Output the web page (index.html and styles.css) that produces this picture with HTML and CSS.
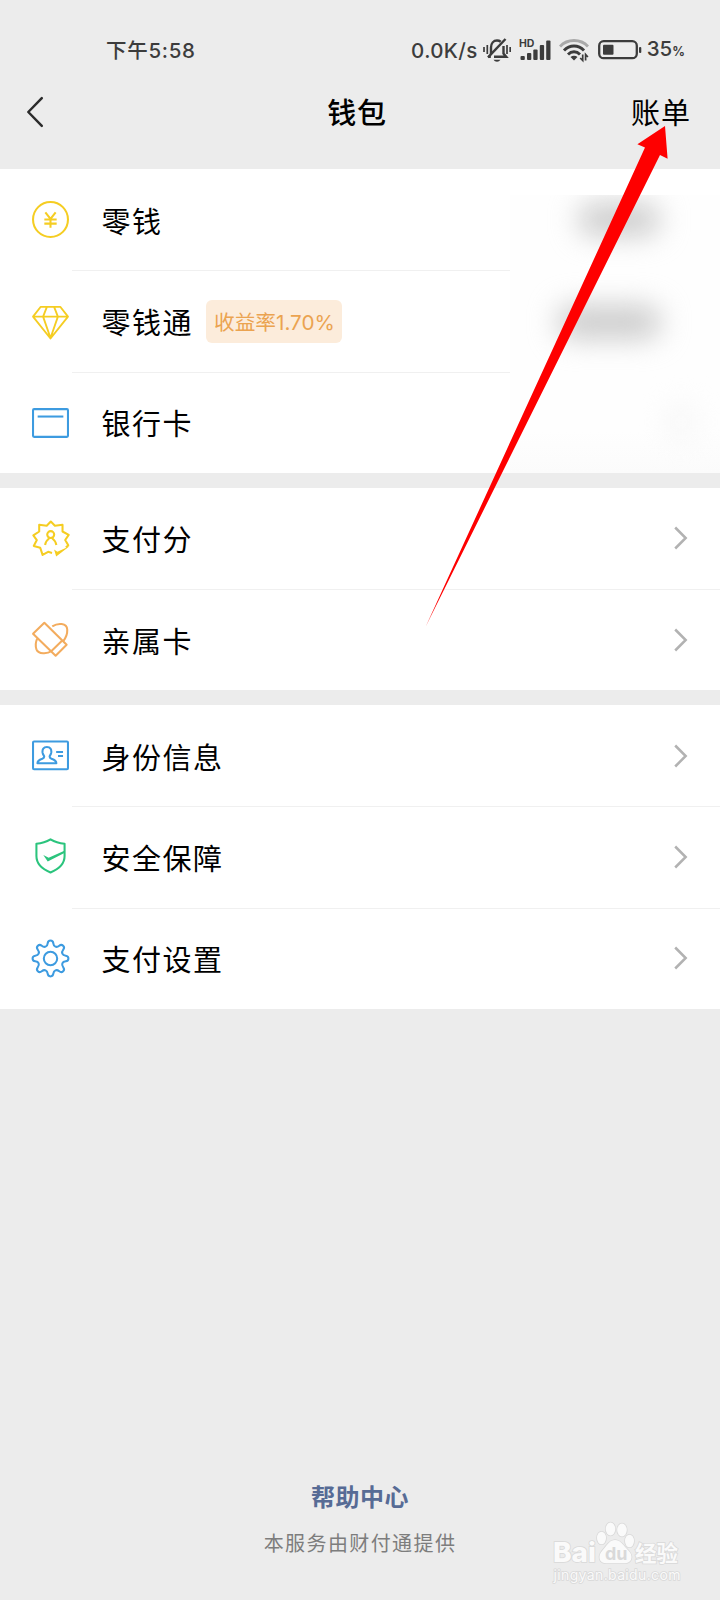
FILE: index.html
```html
<!DOCTYPE html>
<html lang="zh-CN">
<head>
  <meta charset="UTF-8">
  <meta name="viewport" content="width=device-width, initial-scale=1.0">
  <title>钱包</title>
  <link rel="stylesheet" href="styles.css">
</head>
<body>
  <div class="status-bar">
    <span class="time">下午5:58</span>
    <div class="status-right">
      <span class="speed">0.0K/s</span>
      <!-- muted bell -->
      <svg class="bell" width="28" height="26" viewBox="0 0 28 26" fill="none" stroke="#3c3c3c" stroke-width="2.400">
        <path d="M8 17V10.500C8 6.500 10.500 3.500 14 3.500c1.500 0 2.700.4 3.700 1.200M20.500 9v7.500l2.700 3.200H11M5.300 19.700h2.500"/>
        <path d="M22.500 2 5 20.300"/>
        <path d="M10.500 22.800h7c-1 1.300-2 1.900-3.500 1.900s-2.700-.6-3.500-1.900z" fill="#3c3c3c" stroke="none"/>
        <path d="M1 10v5M4.300 8v9M24 8v9M27.200 10v5" stroke-width="1.700"/>
      </svg>
      <!-- signal -->
      <svg class="signal" width="32" height="26" viewBox="0 0 32 26">
        <text x="0" y="9.500" class="hd">HD</text>
        <g fill="#3c3c3c">
          <rect x="1.500" y="19" width="4.300" height="4" rx="1"/>
          <rect x="8" y="16" width="4.300" height="7" rx="1"/>
          <rect x="14.300" y="12.500" width="4.300" height="10.500" rx="1"/>
          <rect x="20.800" y="8" width="4.300" height="15" rx="1"/>
          <rect x="27.200" y="3.500" width="4.300" height="19.500" rx="1"/>
        </g>
      </svg>
      <!-- wifi -->
      <svg class="wifi" width="30" height="26" viewBox="0 0 30 26" fill="none" stroke="#3c3c3c" stroke-width="2.900">
        <path d="M1 9.500C8.500 1.500 21.500 1.500 29 9.500" stroke="#a9a9a9"/>
        <path d="M5 13.500c5.600-6 14.400-6 20 0M9 17.500c3.500-3.600 8.500-3.600 12 0"/>
        <path d="M11.500 20c2-1.800 5-1.800 7 0L15 23.500z" fill="#3c3c3c" stroke="none"/>
        <path d="M23.700 17.500v6l-2.500-2.500M26.600 23.500v-6l2.300 2.500" stroke-width="1.700"/>
      </svg>
      <!-- battery -->
      <svg class="battery" width="44" height="20" viewBox="0 0 44 20">
        <rect x="1.200" y="1.200" width="37.600" height="17" rx="4.500" fill="none" stroke="#3c3c3c" stroke-width="2.300"/>
        <rect x="5" y="4.800" width="10.500" height="10" rx="1" fill="#3c3c3c"/>
        <rect x="41" y="7" width="2.300" height="6" rx="1" fill="#3c3c3c"/>
      </svg>
      <span class="percent">35<small>%</small></span>
    </div>
  </div>

  <header class="nav">
    <svg class="back" width="18" height="32" viewBox="0 0 18 32" fill="none" stroke="#2b2b2b" stroke-width="2.500" stroke-linecap="round" stroke-linejoin="round">
      <path d="M15.800 2.200 2.300 16l13.500 13.800"/>
    </svg>
    <h1>钱包</h1>
    <a class="bill">账单</a>
  </header>

  <main>
    <section class="group group-balance">
      <div class="row">
        <svg class="icon yellow" viewBox="0 0 36 36">
          <circle cx="18" cy="18" r="17"/>
          <path d="M13 11l5 6.500 5-6.500M12 18h12M12 22h12M18 17.500V26"/>
        </svg>
        <div class="cell">零钱</div>
      </div>
      <div class="row">
        <svg class="icon yellow" viewBox="0 0 36 36">
          <path d="M8.500 3.700h19L35 13.300 18 34.500 1 13.300zM1 13.300h34M14.500 3.700l-3.700 9.600L18 34l7.200-20.700-3.700-9.600" stroke-width="1.800"/>
        </svg>
        <div class="cell">零钱通<span class="badge">收益率1.70%</span></div>
      </div>
      <div class="row">
        <svg class="icon blue" viewBox="0 0 36 36">
          <rect x="1" y="5" width="34" height="27" rx="1"/>
          <path d="M5.500 12.200h25"/>
        </svg>
        <div class="cell">银行卡</div>
      </div>
      <div class="mosaic">
        <i class="smudge smudge-a"></i>
        <i class="smudge smudge-b"></i>
        <i class="smudge smudge-c"></i>
      </div>
    </section>

    <section class="group">
      <div class="row">
        <svg class="icon yellow" viewBox="0 0 36 36">
          <path d="M19.500 32l-3.800-1-5.400 3-2.300-7-6.300-1.800 3-5.700-3.400-4.500L7 11.200V4.700l7.300.8L18.300 1.500l4 4 7.400-.8v6.500l6 3.300-3.400 5 3 5-2.300 2.300"/>
          <circle cx="18.200" cy="14.200" r="3.400"/>
          <path d="M12.700 24.300c.5-3 2-5 4.300-6.800M23.700 24.300c-.5-3-2-5-4.300-6.800"/>
          <path d="M21.500 28.800l3.200 2L36.500 25.500 23.500 35.500z" class="solid"/>
        </svg>
        <div class="cell">支付分</div>
        <svg class="arrow" viewBox="0 0 14 24"><path d="M1.200 1.500 11.700 12 1.200 22.500"/></svg>
      </div>
      <div class="row">
        <svg class="icon orange" viewBox="0 0 36 36">
          <path d="M12 1.800 33.700 23.200 23 33.800 1 12.500zM18.700 29.500l11-10.700"/>
          <path d="M19.700 5.200C25 1.800 34 1.500 34.300 8.500c.2 4.500-1.600 8.200-4 11.300M5 17.200c-1.700 4-1.800 7-.7 10.300 2 5 10.500 4.800 14.900 1.700"/>
        </svg>
        <div class="cell">亲属卡</div>
        <svg class="arrow" viewBox="0 0 14 24"><path d="M1.200 1.500 11.700 12 1.200 22.500"/></svg>
      </div>
    </section>

    <section class="group">
      <div class="row">
        <svg class="icon blue" viewBox="0 0 36 36">
          <rect x="1" y="4.300" width="34" height="27" rx="1"/>
          <path d="M14.500 9.800c3.300 0 4.700 2.300 4.200 5.500-.3 1.500-1 2.500-1.500 3.300-.3 1.300.3 2 1.800 2.600 3 1.100 4.700 1.800 4.700 4.300h-18.400c0-2.500 1.700-3.200 4.700-4.300 1.500-.6 2.100-1.300 1.800-2.600-.5-.8-1.200-1.800-1.500-3.300-.5-3.200.9-5.500 4.200-5.500zM23.500 14.500h6.700M25.300 18.500h4.900"/>
        </svg>
        <div class="cell">身份信息</div>
        <svg class="arrow" viewBox="0 0 14 24"><path d="M1.200 1.500 11.700 12 1.200 22.500"/></svg>
      </div>
      <div class="row">
        <svg class="icon green" viewBox="0 0 36 36">
          <path d="M18 1.300c4.500 2.700 9 3.800 13.700 4.200V17.500c0 7.500-5 12.500-13.700 16-8.700-3.500-13.700-8.500-13.700-16V5.500C9 5.100 13.500 4 18 1.300z"/>
          <path d="M11 16.500l5.200 2.700L31.500 12.300v2.400L15.300 22.800z" class="solid"/>
        </svg>
        <div class="cell">安全保障</div>
        <svg class="arrow" viewBox="0 0 14 24"><path d="M1.200 1.500 11.700 12 1.200 22.500"/></svg>
      </div>
      <div class="row">
        <svg class="icon blue" viewBox="0 0 36 36">
          <circle cx="18" cy="18" r="6.500"/>
          <path id="gear"/>
        </svg>
        <div class="cell">支付设置</div>
        <svg class="arrow" viewBox="0 0 14 24"><path d="M1.200 1.500 11.700 12 1.200 22.500"/></svg>
      </div>
    </section>
  </main>

  <footer>
    <a class="help">帮助中心</a>
    <p>本服务由财付通提供</p>
  </footer>

  <svg class="watermark" width="140" height="70" viewBox="0 0 140 70">
    <g class="mark">
      <text x="10" y="41" class="wm-bai" textLength="43" lengthAdjust="spacingAndGlyphs">Bai</text>
      <ellipse cx="58.500" cy="17" rx="4.500" ry="6.300"/>
      <ellipse cx="67.500" cy="8" rx="4.800" ry="6.500"/>
      <ellipse cx="79" cy="9" rx="4.800" ry="6.500"/>
      <ellipse cx="86.500" cy="20" rx="4.500" ry="6.300"/>
      <path d="M72 19c5 0 8 4.500 11 8 3.500 3.500 5.500 5.500 5.500 9 0 4-3 6.200-6.500 6.200H63c-4 0-6.500-2.200-6.500-6.200 0-3.500 2-5.500 5-9 3-3.500 5.500-8 10.500-8z"/>
    </g>
    <text x="62" y="39" class="wm-du">du</text>
    <text x="92" y="39.500" class="mark wm-jy">经验</text>
    <text x="10.500" y="58.500" class="mark wm-url" textLength="127">jingyan.baidu.com</text>
  </svg>

  <svg class="pointer" width="260" height="520" viewBox="420 120 260 520">
    <path d="M665 126 667.600 158.700 660 155 425.500 627 645 147.600 637.400 144.300z"/>
  </svg>

  <script>
    // Eight-tooth gear outline, corners rounded by quadratic curves
    const points = [];
    for (let i = 0; i < 8; i++) {
      [[-14, 12.600], [-8, 17.600], [8, 17.600], [14, 12.600]].forEach(function(p) {
        const a = (i * 45 + p[0] - 90) * Math.PI / 180;
        points.push([18 + p[1] * Math.cos(a), 18 + p[1] * Math.sin(a)]);
      });
    }
    let d = '';
    points.forEach(function(p, i) {
      const next = points[(i + 1) % points.length];
      const after = points[(i + 2) % points.length];
      if (i === 0) {
        d += 'M' + (p[0] + next[0]) / 2 + ' ' + (p[1] + next[1]) / 2;
      }
      d += 'Q' + next[0] + ' ' + next[1] + ' ' + (next[0] + after[0]) / 2 + ' ' + (next[1] + after[1]) / 2;
    });
    document.getElementById('gear').setAttribute('d', d + 'z');
  </script>
</body>
</html>
```
FILE: styles.css
```css
* {
  box-sizing: border-box;
}
body {
  position: relative;
  width: 720px;
  height: 1600px;
  margin: 0;
  overflow: hidden;
  display: flex;
  flex-direction: column;
  background: #ececec;
  color: #000;
  font-family: 'Noto Sans CJK SC', sans-serif;
}
.status-bar {
  height: 78px;
  padding: 23px 35px 0 106px;
  display: flex;
  align-items: center;
  justify-content: space-between;
  color: #3c3c3c;
  font: 500 20.5px/28px Inter, 'Noto Sans CJK SC', sans-serif;
}
.time {
  letter-spacing: 0.7px;
}
.status-right {
  display: flex;
  align-items: center;
}
.speed {
  letter-spacing: 0.4px;
}
.bell {
  margin: -2px 0 0 5px;
}
.signal {
  margin: -2px 0 0 8px;
}
.hd {
  font: 700 10.5px Inter, sans-serif;
  fill: #3c3c3c;
}
.wifi {
  margin: -2px 0 0 8px;
}
.battery {
  margin: -2px 0 0 9px;
}
.percent {
  margin-left: 5px;
}
.percent small {
  font-size: 12.5px;
  font-weight: 700;
}
.nav {
  height: 91px;
  padding: 0 29px 25px 26px;
  display: grid;
  grid-template-columns: 1fr auto 1fr;
  align-items: center;
  font-size: 29px;
  line-height: 40px;
}
.back {
  margin-top: 2px;
}
.nav h1 {
  margin: 0 3px 0 0;
  font-size: 29px;
  font-weight: 500;
  letter-spacing: 0.8px;
}
.bill {
  justify-self: end;
  letter-spacing: 1px;
}
main {
  display: flex;
  flex-direction: column;
  gap: 14.6px;
}
.group {
  position: relative;
  background: #fff;
}
.row {
  height: 101.35px;
  padding-left: 32px;
  display: flex;
  align-items: center;
  position: relative;
}
.row + .row::before {
  content: '';
  position: absolute;
  top: 0;
  left: 72px;
  right: 0;
  height: 1px;
  background: #f0f0f0;
}
.icon {
  width: 37px;
  height: 37px;
  fill: none;
  stroke: currentColor;
  stroke-width: 2;
  stroke-linejoin: round;
  overflow: visible;
}
.icon .solid {
  fill: currentColor;
  stroke: none;
}
.yellow {
  color: #f5cd22;
}
.orange {
  color: #f3ac5e;
}
.blue {
  color: #3d9be0;
}
.green {
  color: #2bc47d;
}
.cell {
  flex: 1;
  display: flex;
  align-items: center;
  padding-left: 32.4px;
  font-size: 29px;
  line-height: 42px;
  letter-spacing: 1.5px;
}
.badge {
  margin: 1px 0 0 13.5px;
  width: 136px;
  height: 43px;
  border-radius: 6px;
  background: #fcecdb;
  color: #eba350;
  font: 400 20.7px/45px Inter, 'Noto Sans CJK SC', sans-serif;
  letter-spacing: 0;
  text-align: center;
}
.arrow {
  width: 14px;
  height: 24px;
  margin-right: 32px;
  fill: none;
  stroke: #b2b2b2;
  stroke-width: 2.5;
}
/* hidden amounts */
.mosaic {
  position: absolute;
  left: 510px;
  right: 0;
  top: 26px;
  bottom: 0;
  overflow: hidden;
  background: linear-gradient(#fefefe, #fefefe 85%, #fbfbfb);
}
.smudge {
  position: absolute;
  border-radius: 20px;
  background: #ccc;
  filter: blur(14px);
}
.smudge-a {
  left: 68px;
  top: 8px;
  width: 82px;
  height: 33px;
}
.smudge-b {
  left: 47px;
  top: 110px;
  width: 104px;
  height: 34px;
}
.smudge-c {
  left: 157px;
  top: 208px;
  width: 28px;
  height: 38px;
  background: #f7f7f7;
}
footer {
  margin-top: auto;
  padding-bottom: 42px;
  text-align: center;
}
.help {
  display: block;
  color: #576b95;
  font-size: 24px;
  font-weight: 700;
  line-height: 36px;
  letter-spacing: 0.5px;
}
footer p {
  margin: 14px 0 0;
  color: #7d7d7d;
  font-size: 20px;
  line-height: 30px;
  letter-spacing: 1.4px;
}
.watermark {
  position: absolute;
  left: 543px;
  top: 1521px;
}
.mark {
  fill: #fafafa;
  stroke: #d9d9d9;
  stroke-width: 1.6;
  paint-order: stroke;
}
.wm-bai {
  font: 800 27px Inter, sans-serif;
}
.wm-du {
  font: 700 18px Inter, sans-serif;
  fill: #d9d9d9;
}
.wm-jy {
  font: 700 21.5px 'Noto Sans CJK SC', sans-serif;
}
.wm-url {
  font: 400 14px Inter, sans-serif;
}
.pointer {
  position: absolute;
  left: 420px;
  top: 120px;
  fill: #fe0000;
}
```
